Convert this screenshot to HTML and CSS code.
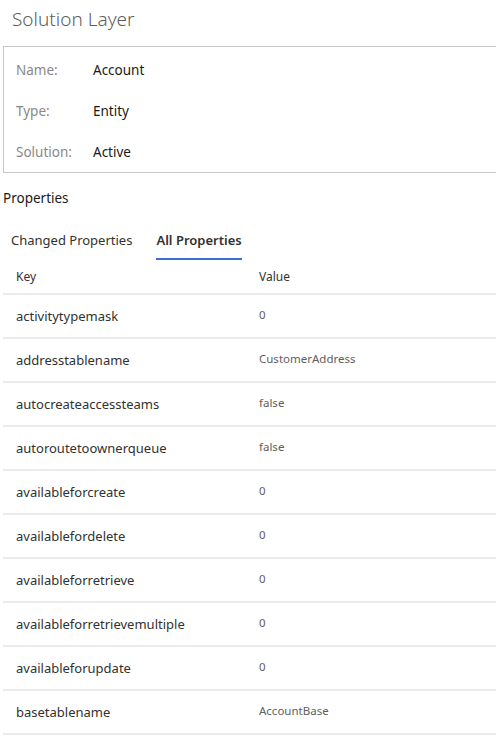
FILE: index.html
```html
<!DOCTYPE html>
<html>
<head>
<meta charset="utf-8">
<link rel="stylesheet" href="styles.css">
</head>
<body>
<div class="page">
  <h1 class="title">Solution Layer</h1>
  <div class="info">
    <div class="info-row"><span class="info-label">Name:</span><span class="info-value">Account</span></div>
    <div class="info-row"><span class="info-label">Type:</span><span class="info-value">Entity</span></div>
    <div class="info-row"><span class="info-label">Solution:</span><span class="info-value">Active</span></div>
  </div>
  <div class="section">Properties</div>
  <div class="tabs">
    <div class="tab">Changed Properties</div>
    <div class="tab active">All Properties</div>
  </div>
  <div class="table">
    <div class="row head"><div class="key">Key</div><div class="val">Value</div></div>
    <div class="row"><div class="key">activitytypemask</div><div class="val">0</div></div>
    <div class="row"><div class="key">addresstablename</div><div class="val">CustomerAddress</div></div>
    <div class="row"><div class="key">autocreateaccessteams</div><div class="val">false</div></div>
    <div class="row"><div class="key">autoroutetoownerqueue</div><div class="val">false</div></div>
    <div class="row"><div class="key">availableforcreate</div><div class="val">0</div></div>
    <div class="row"><div class="key">availablefordelete</div><div class="val">0</div></div>
    <div class="row"><div class="key">availableforretrieve</div><div class="val">0</div></div>
    <div class="row"><div class="key">availableforretrievemultiple</div><div class="val">0</div></div>
    <div class="row"><div class="key">availableforupdate</div><div class="val">0</div></div>
    <div class="row"><div class="key">basetablename</div><div class="val">AccountBase</div></div>
  </div>
</div>
</body>
</html>
```
FILE: styles.css
```css
html, body {
  margin: 0;
  padding: 0;
  background: #ffffff;
  font-family: "Noto Sans", "Open Sans", sans-serif;
  color: #323130;
  overflow: hidden;
}
.page {
  padding: 0 0 0 3px;
}
.title {
  margin: 0;
  padding: 5px 0 0 9px;
  height: 46px;
  box-sizing: border-box;
  font-size: 19px;
  font-weight: 300;
  color: #605e5c;
  line-height: 28px;
}
.info {
  border: 1px solid #c8c6c4;
  border-right: none;
  box-sizing: border-box;
  padding: 2px 0 0 12px;
  display: flex;
  flex-direction: column;
}
.info-row {
  display: flex;
  flex: 0 0 41px;
  height: 41px;
  align-items: center;
  font-size: 13.5px;
}
.info-label {
  width: 77px;
  color: #8a8886;
}
.info-value {
  color: #1b1a19;
}
.section {
  margin-top: 15px;
  font-size: 13.5px;
  line-height: 20px;
  color: #1b1a19;
}
.tabs {
  display: flex;
  gap: 24px;
  margin-top: 19px;
  padding-left: 8px;
}
.tab {
  font-size: 13px;
  line-height: 20px;
  padding: 3px 0 8px;
  border-bottom: 2px solid transparent;
  color: #323130;
}
.tab.active {
  font-weight: 600;
  border-bottom-color: #3a6fd8;
}
.table {
  margin-top: 2px;
}
.row {
  display: flex;
  height: 44px;
  align-items: center;
  border-bottom: 2px solid #edebe9;
  box-sizing: border-box;
}
.row.head {
  height: 33px;
}
.key {
  width: 243px;
  padding-left: 13px;
  font-size: 13px;
  color: #323130;
}
.val {
  font-size: 11.5px;
  color: #605e5c;
  margin-top: -4px;
}
.row.head .key, .row.head .val {
  font-size: 12px;
  margin-top: -3px;
}
.row.head .val {
  color: #323130;
}
```
